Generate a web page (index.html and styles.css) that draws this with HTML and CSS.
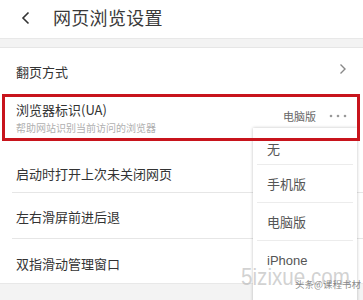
FILE: index.html
```html
<!DOCTYPE html>
<html lang="zh">
<head>
<meta charset="utf-8">
<link rel="stylesheet" href="styles.css">
</head>
<body>
<div class="page">
  <header class="topbar">
    <svg class="back" width="10" height="14" viewBox="0 0 10 14"><polyline points="7.5,1.5 2,7 7.5,12.5" fill="none" stroke="#333" stroke-width="1.6"/></svg>
    <span class="title">网页浏览设置</span>
  </header>
  <div class="band"></div>
  <div class="list">
    <div class="row r1">
      <span class="label">翻页方式</span>
      <svg class="chev" width="8" height="12" viewBox="0 0 8 12"><polyline points="1.5,1.5 6,6 1.5,10.5" fill="none" stroke="#888" stroke-width="1.4"/></svg>
    </div>
    <div class="row r2">
      <div class="ua">
        <span class="label">浏览器标识(UA)</span>
        <span class="sub">帮助网站识别当前访问的浏览器</span>
      </div>
      <span class="value">电脑版</span>
      <svg class="dots" width="18" height="4" viewBox="0 0 18 4"><circle cx="2" cy="2" r="1.3" fill="#999"/><circle cx="9" cy="2" r="1.3" fill="#999"/><circle cx="16" cy="2" r="1.3" fill="#999"/></svg>
    </div>
    <div class="row r3 line"><span class="label">启动时打开上次未关闭网页</span></div>
    <div class="row r4 line"><span class="label">左右滑屏前进后退</span></div>
    <div class="row r5"><span class="label">双指滑动管理窗口</span></div>
  </div>
  <div class="band bottom"></div>

  <div class="menu">
    <div class="item">无</div>
    <div class="item">手机版</div>
    <div class="item">电脑版</div>
    <div class="item last">iPhone</div>
  </div>
  <div class="highlight"></div>
  <div class="wm">5izixue.com</div>
  <div class="wm2">头条@课程书材</div>
</div>
</body>
</html>
```
FILE: styles.css
```css
* { box-sizing: border-box; margin: 0; padding: 0; }
html, body { width: 363px; height: 300px; overflow: hidden; background: #fff; }
body { font-family: "Noto Sans CJK SC", "Noto Sans", sans-serif; color: #333; }
.page { position: relative; width: 363px; height: 300px; overflow: hidden; background: #fff; }
.topbar { height: 38px; display: flex; align-items: center; padding-left: 21px; }
.back { margin-right: 22px; margin-top: -2px; }
.title { font-size: 18px; color: #3a3a3a; letter-spacing: 0.3px; margin-top: -4px; }
.band { height: 10px; background: #f3f3f3; border-top: 1px solid #e8e8e8; border-bottom: 1px solid #e6e6e6; }
.band.bottom { height: 17px; border-bottom: none; }
.list { display: flex; flex-direction: column; }
.row { display: flex; align-items: center; padding: 0 16px; position: relative; }
.label { font-size: 13px; color: #333; }
.r1 { height: 46px; justify-content: space-between; }
.chev { margin-top: -5px; }
.r2 { height: 47px; }
.ua { display: flex; flex-direction: column; flex: 1; padding-top: 1px; }
.ua .label { line-height: 18px; }
.sub { font-size: 10px; color: #b0b0b0; line-height: 14px; margin-top: 2px; }
.value { font-size: 11px; color: #666; margin-right: 13px; margin-top: -4px; }
.dots { margin-top: -4px; }
.r3 { height: 52px; padding-top: 12px; }
.r4 { height: 46px; }
.r5 { height: 44px; padding-top: 4px; }
.line::after { content: ""; position: absolute; left: 12px; right: 0; bottom: 0; height: 1px; background: #e6e6e6; }
.menu { position: absolute; left: 253px; top: 128px; width: 104px; height: 180px; background: #fff; box-shadow: 0 0 3px rgba(0,0,0,0.25); display: flex; flex-direction: column; }
.item { height: 38px; display: flex; align-items: center; font-size: 13px; color: #555; border-bottom: 1px solid #ececec; margin: 0 4px; padding-left: 10px; }
.item:first-child { height: 37px; padding-top: 4px; }
.item.last { border-bottom: none; font-family: "Liberation Sans", Arial, sans-serif; }
.highlight { position: absolute; left: 2px; top: 94px; width: 358px; height: 47px; border: 3px solid #c8141c; }
.wm { position: absolute; left: 241px; top: 265px; font-family: "Liberation Sans", Arial, sans-serif; font-size: 24px; line-height: 24px; color: rgba(180,180,180,0.6); transform: scaleX(0.86); transform-origin: left top; white-space: nowrap; }
.wm2 { position: absolute; left: 295px; top: 278px; font-size: 9.5px; line-height: 12px; color: rgba(100,100,100,0.75); white-space: nowrap; }
```
